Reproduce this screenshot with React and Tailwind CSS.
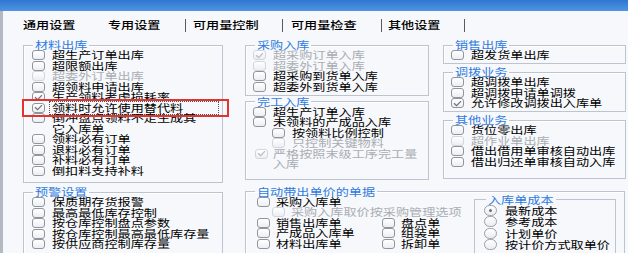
import React from "react";

const CB = ({ checked, disabled }) => (
  <span
    className={`inline-flex shrink-0 items-center justify-center w-[13px] h-[10px] rounded-[3px] border bg-gradient-to-b from-white to-[#eceef2] ${
      disabled ? "border-[#d2d6dc]" : "border-[#8f959d]"
    }`}
  >
    {checked && (
      <svg width="9" height="7" viewBox="0 0 9 7">
        <path
          d="M1 3.2 L3.6 5.6 L8 1.2"
          fill="none"
          stroke={disabled ? "#b9bcc1" : "#6b7077"}
          strokeWidth="1.2"
        />
      </svg>
    )}
  </span>
);

const Radio = ({ checked }) => (
  <span className="inline-flex shrink-0 items-center justify-center w-[13px] h-[11px] rounded-full border border-[#9aa0a8] bg-gradient-to-b from-white to-[#eaecef]">
    {checked && <span className="w-[3px] h-[3px] rounded-full bg-[#6b7077]" />}
  </span>
);

const T = ({ children, className }) => (
  <span className={`inline-block origin-left scale-x-[1.25] whitespace-nowrap ${className || ""}`}>
    {children}
  </span>
);

const Row = ({ label, checked, disabled, indent, gap }) => (
  <div className={`flex items-center h-[10.5px] ${indent ? "ml-[19px]" : ""}`}>
    <CB checked={checked} disabled={disabled} />
    <T
      className={`${gap ? "ml-[6px]" : "ml-[7px]"} leading-[10.5px] ${
        disabled ? "text-[#a9adb3]" : "text-[#000]"
      }`}
    >
      {label}
    </T>
  </div>
);

const Group = ({ title, className, lp, children }) => (
  <fieldset
    className={`border border-[#bcc4cf] min-w-0 shadow-[inset_1px_1px_0_#ffffff] ${className || ""}`}
  >
    <legend className={`ml-[9px] pl-[2px] leading-[10px] text-[#2f7be0] ${lp || "pr-[12px]"}`}>
      <T>{title}</T>
    </legend>
    {children}
  </fieldset>
);

const Sep = () => <div className="w-[1px] h-[13px] shrink-0 bg-[#5a5a5a]" />;

export default function App() {
  return (
    <div className="relative w-[628px] h-[253px] overflow-hidden bg-[#f6f8fb] font-['Noto_Sans_CJK_SC','Noto_Sans',sans-serif] text-[10.5px] font-normal text-[#000] flex flex-col">
      <div className="h-[11px] shrink-0 bg-gradient-to-b from-[#2e77d2] to-[#5094e2]" />
      <div className="flex flex-1 min-h-0">
        <div className="w-[3px] shrink-0 bg-[#b4b9c1]" />
        <div className="flex-1 flex flex-col min-w-0">
          {/* tabs */}
          <div className="h-[22px] shrink-0 flex items-center pl-[20px] pt-[6px] leading-[14px] font-medium">
            <span className="w-[85px] shrink-0"><T>通用设置</T></span>
            <span className="w-[77px] shrink-0"><T>专用设置</T></span>
            <Sep />
            <span className="ml-[7px] w-[89px] shrink-0"><T>可用量控制</T></span>
            <Sep />
            <span className="ml-[8px] w-[90px] shrink-0"><T>可用量检查</T></span>
            <Sep />
            <span className="ml-[6px] w-[76px] shrink-0"><T>其他设置</T></span>
            <Sep />
          </div>

          <div className="flex pl-[20px] pt-[7px]">
            {/* left column */}
            <div className="w-[200px] shrink-0 flex flex-col">
              <Group title="材料出库" className="pb-[5.5px]">
                <div className="pl-[8px] flex flex-col">
                  <Row label="超生产订单出库" />
                  <Row label="超限额出库" />
                  <Row label="超委外订单出库" disabled />
                  <Row label="超领料申请出库" />
                  <Row label="生产领料考虑损耗率" checked />
                  <div className="relative -mt-[2px] pt-[2px] h-[12.5px] flex items-center bg-[#f6f8fb]">
                    <CB checked />
                    <span className="ml-[4px] w-[170px] h-[14px] border border-dotted border-[#555] px-[2px] leading-[12px]">
                      <T>领料时允许使用替代料</T>
                    </span>
                  </div>
                  <Row label="倒冲盘点领料不走生成其" />
                  <div className="h-[10.5px] leading-[10.5px] pl-[20px]">
                    <T>它入库单</T>
                  </div>
                  <Row label="领料必有订单" />
                  <Row label="退料必有订单" />
                  <Row label="补料必有订单" />
                  <Row label="倒扣料支持补料" />
                </div>
              </Group>
              <Group title="预警设置" className="mt-[4.5px] pb-[6px]">
                <div className="pl-[8px] flex flex-col">
                  <Row label="保质期存货报警" />
                  <Row label="最高最低库存控制" />
                  <Row label="按仓库控制盘点参数" />
                  <Row label="按仓库控制最高最低库存量" />
                  <Row label="按供应商控制库存量" />
                </div>
              </Group>
            </div>

            {/* right area */}
            <div className="ml-[22px] w-[381px] shrink-0 flex flex-col">
              <div className="flex items-start">
                <div className="w-[184px] shrink-0 flex flex-col">
                  <Group title="采购入库" className="pb-[3px]">
                    <div className="pl-[7px] flex flex-col">
                      <Row label="超采购订单入库" checked disabled />
                      <Row label="超委外订单入库" disabled />
                      <Row label="超采购到货单入库" />
                      <Row label="超委外到货单入库" />
                    </div>
                  </Group>
                  <Group title="完工入库" className="mt-[0.5px] pb-[9px]">
                    <div className="pl-[7px] flex flex-col">
                      <Row label="超生产订单入库" />
                      <Row label="未领料的产成品入库" />
                      <Row label="按领料比例控制" indent />
                      <Row label="只控制关键物料" indent disabled />
                      <div className="flex items-start h-[21px] ml-[2px]">
                        <div className="h-[10.5px] flex items-center">
                          <CB checked disabled />
                        </div>
                        <div className="ml-[5px] flex flex-col leading-[10.5px] text-[#a9adb3]">
                          <T>严格按照末级工序完工量</T>
                          <T>入库</T>
                        </div>
                      </div>
                    </div>
                  </Group>
                </div>

                <div className="ml-[14px] w-[183px] shrink-0 flex flex-col">
                  <Group title="销售出库" className="pb-[2px]">
                    <div className="pl-[7px] flex flex-col">
                      <Row label="超发货单出库" />
                    </div>
                  </Group>
                  <Group title="调拨业务" className="mt-[3.5px] pb-[2.5px]">
                    <div className="pl-[7px] flex flex-col">
                      <Row label="超调拨单出库" />
                      <Row label="超调拨申请单调拨" />
                      <Row label="允许修改调拨出入库单" checked />
                    </div>
                  </Group>
                  <Group title="其他业务" className="mt-[3px] pb-[11px]">
                    <div className="pl-[7px] flex flex-col">
                      <Row label="货位零出库" />
                      <Row label="超作业单出库" disabled />
                      <Row label="借出借用单审核自动出库" />
                      <Row label="借出归还单审核自动入库" />
                    </div>
                  </Group>
                </div>
              </div>

              <Group
                title="自动带出单价的单据"
                lp="pr-[25px]"
                className="mt-[7px] w-[380px] pb-[6px]"
              >
                <div className="flex">
                  <div className="w-[228px] shrink-0 pl-[11px] flex flex-col">
                    <Row label="采购入库单" gap />
                    <div className="flex items-center h-[10.5px] ml-[15px]">
                      <CB disabled />
                      <T className="ml-[6px] leading-[10.5px] text-[#a9adb3]">
                        采购入库取价按采购管理选项
                      </T>
                    </div>
                    <div className="grid grid-cols-[125px_1fr]">
                      <Row label="销售出库单" gap />
                      <Row label="盘点单" gap />
                      <Row label="产成品入库单" gap />
                      <Row label="组装单" gap />
                      <Row label="材料出库单" gap />
                      <Row label="拆卸单" gap />
                    </div>
                  </div>
                  <fieldset className="-mt-[2px] w-[142px] shrink-0 border border-[#bcc4cf] min-w-0 pb-[6px]">
                    <legend className="ml-[11px] pl-[2px] pr-[15px] leading-[10px] text-[#2f7be0]">
                      <T>入库单成本</T>
                    </legend>
                    <div className="pl-[9px] flex flex-col">
                      {[
                        ["最新成本", true],
                        ["参考成本", false],
                        ["计划单价", false],
                        ["按计价方式取单价", false],
                      ].map(([t, c]) => (
                        <div key={t} className="flex items-center h-[11.5px]">
                          <Radio checked={c} />
                          <T className="ml-[8px] leading-[11.5px]">{t}</T>
                        </div>
                      ))}
                    </div>
                  </fieldset>
                </div>
              </Group>
            </div>
          </div>
        </div>
      </div>

      {/* annotation highlight */}
      <div className="absolute left-[22px] top-[99px] w-[207px] h-[18px] border-2 border-[#e3322f]" />
    </div>
  );
}
